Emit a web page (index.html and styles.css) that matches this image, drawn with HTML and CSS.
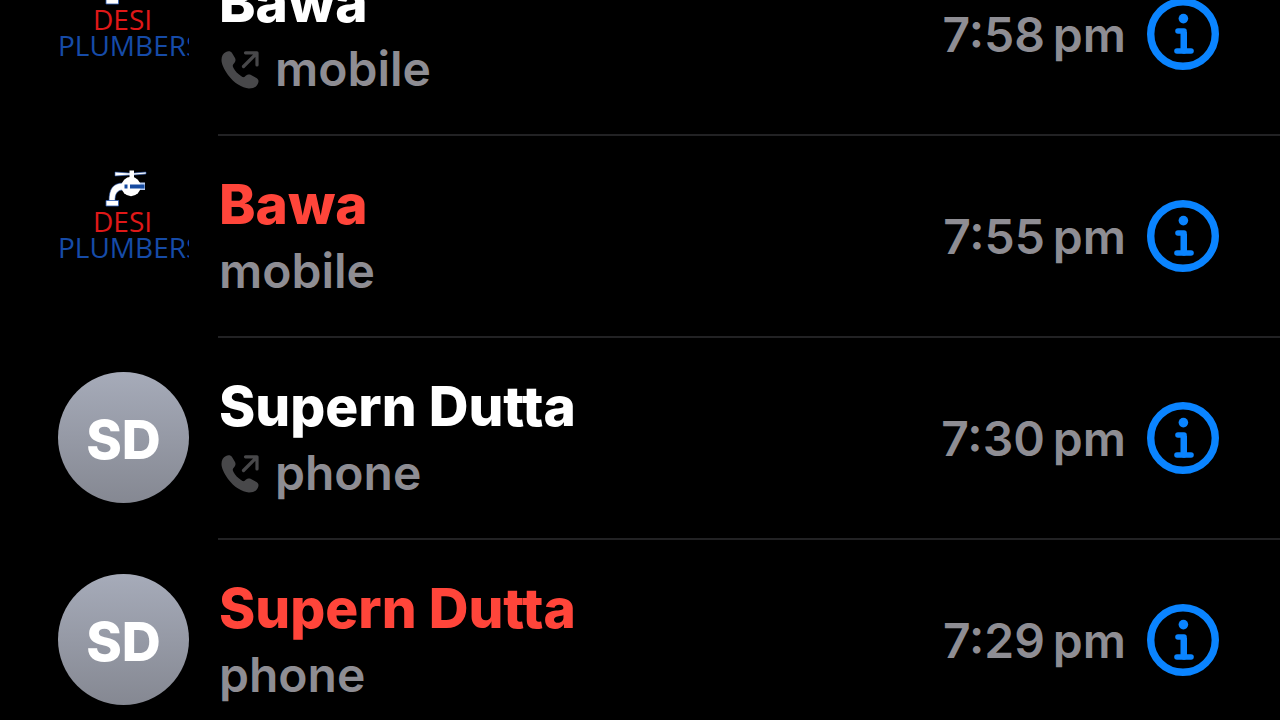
FILE: index.html
```html
<!DOCTYPE html>
<html lang="en">
<head>
    <meta charset="UTF-8">
    <meta name="viewport" content="width=device-width, initial-scale=1">
    <title>Recents</title>
    <link rel="stylesheet" href="styles.css">
</head>
<body>
<!-- shared icons -->
<svg class="sprite" aria-hidden="true">
    <symbol id="info" viewBox="0 0 72 72">
        <circle cx="36" cy="36" r="32.3" fill="none" stroke="currentColor" stroke-width="7.4"/>
        <circle cx="36.4" cy="20.6" r="4.8" fill="currentColor"/>
        <path d="M31 33H37V53" fill="none" stroke="currentColor" stroke-width="5.6" stroke-linecap="round" stroke-linejoin="round"/>
        <path d="M33.5 34H40V52H33.5Z" fill="currentColor"/>
        <path d="M30 53H44" fill="none" stroke="currentColor" stroke-width="5.6" stroke-linecap="round"/>
    </symbol>
    <symbol id="outgoing" viewBox="-2 -1 40 40">
        <path d="M5 2C7 .5 10 1 11 3L14 8C15 10 14.500 12 12.500 14C11.500 15 11.500 16 12.500 18C14 21 17 24 20 26C22 27.500 23 27.500 24 26.500C26 24.500 28 24 30 25L35.500 28C37.500 29.500 38 31 37 33.500C35.500 37 32.500 38.500 28 38.500C21 38 13 33 7 25C3 19 .5 14 .5 10C.5 6 2 3.500 5 2Z" fill="currentColor"/>
        <path d="M22.500 16.500L35 4M24.500 2.800H36V15" fill="none" stroke="currentColor" stroke-width="3.200" stroke-linecap="round" stroke-linejoin="round"/>
    </symbol>
    <symbol id="tap" viewBox="0 0 42 38">
        <path d="M10 2L24 3H29L41 2V4L29 5H25L10 6Z" fill="#fff" stroke="#2858b0" stroke-width=".6"/>
        <path d="M24.500 .5H29V9H24.500Z" fill="#fff"/>
        <path d="M18 13C8 13 4 19 4 31H10C10 24 12 20 18 20Z" fill="#fff" stroke="#2858b0" stroke-width=".6"/>
        <path d="M1 30.500H13.500V36H1Z" fill="#fff" stroke="#2858b0" stroke-width=".8"/>
        <path d="M27 12.500H40V20H27Z" fill="#b9cdf2"/>
        <circle cx="26" cy="16.500" r="9.700" fill="#fff"/>
        <path d="M25 14.500H39.500V18.500H25Z" fill="#164ba0"/>
        <path d="M19.500 14.500H22.500V18.500H19.500Z" fill="#164ba0"/>
    </symbol>
</svg>

<ul class="calls">
    <li class="call">
        <div class="logo">
            <svg class="tap" aria-hidden="true"><use href="#tap"/></svg>
            <span class="desi">DESI</span>
            <span class="plumbers">PLUMBERS</span>
        </div>
        <div class="detail">
            <div class="who">
                <h2 class="name">Bawa</h2>
                <p class="line"><svg class="outgoing" aria-hidden="true"><use href="#outgoing"/></svg>mobile</p>
            </div>
            <time class="time" datetime="19:58">7:58&#8198;pm</time>
            <button class="info" type="button" aria-label="Call info"><svg><use href="#info"/></svg></button>
        </div>
    </li>
    <li class="call missed">
        <div class="logo">
            <svg class="tap" aria-hidden="true"><use href="#tap"/></svg>
            <span class="desi">DESI</span>
            <span class="plumbers">PLUMBERS</span>
        </div>
        <div class="detail">
            <div class="who">
                <h2 class="name">Bawa</h2>
                <p class="line">mobile</p>
            </div>
            <time class="time" datetime="19:55">7:55&#8198;pm</time>
            <button class="info" type="button" aria-label="Call info"><svg><use href="#info"/></svg></button>
        </div>
    </li>
    <li class="call">
        <div class="avatar">SD</div>
        <div class="detail">
            <div class="who">
                <h2 class="name">Supern Dutta</h2>
                <p class="line"><svg class="outgoing" aria-hidden="true"><use href="#outgoing"/></svg>phone</p>
            </div>
            <time class="time" datetime="19:30">7:30&#8198;pm</time>
            <button class="info" type="button" aria-label="Call info"><svg><use href="#info"/></svg></button>
        </div>
    </li>
    <li class="call missed">
        <div class="avatar">SD</div>
        <div class="detail">
            <div class="who">
                <h2 class="name">Supern Dutta</h2>
                <p class="line">phone</p>
            </div>
            <time class="time" datetime="19:29">7:29&#8198;pm</time>
            <button class="info" type="button" aria-label="Call info"><svg><use href="#info"/></svg></button>
        </div>
    </li>
</ul>
</body>
</html>
```
FILE: styles.css
```css
* {
    padding: 0;
    margin: 0;
    box-sizing: border-box;
}

html {
    height: 100%;
    overflow: hidden;
    background: #000;
}

body {
    height: 100%;
    overflow: hidden;
    background: #000;
    color: #fff;
    font-family: Inter, "Liberation Sans", sans-serif;
}

.sprite {
    display: none;
}

/* list is scrolled part way through the first row */
.calls {
    list-style: none;
    margin-top: -66px;
}

.call {
    display: flex;
    align-items: flex-start;
    gap: 29px;
    padding-left: 58px;
}

.avatar,
.logo {
    flex: none;
    width: 131px;
    height: 131px;
    margin-top: 34px;
}

.avatar {
    display: flex;
    align-items: center;
    justify-content: center;
    padding-top: 4px;
    border-radius: 50%;
    background: linear-gradient(#a6abb9, #858892);
    font-size: 54px;
    font-weight: 800;
}

.logo {
    overflow: hidden;
    display: flex;
    flex-direction: column;
    font-family: "Open Sans", "Noto Sans", sans-serif;
    font-size: 28px;
    font-weight: 500;
    line-height: 26px;
    white-space: nowrap;
}

.tap {
    width: 42px;
    height: 38px;
    margin-left: 47px;
}

.desi {
    color: #e01818;
    padding-left: 35px;
}

.plumbers {
    color: #164ba8;
}

.detail {
    flex: 1;
    min-width: 0;
    display: flex;
    align-items: center;
    height: 202px;
    padding-right: 61px;
    border-bottom: 2px solid #222224;
}

.who {
    flex: 1;
    min-width: 0;
    padding-top: 6px;
    padding-left: 1px;
}

.name {
    font-size: 55px;
    line-height: 64px;
    font-weight: 800;
}

.missed .name {
    color: #ff453a;
}

.line {
    display: flex;
    align-items: center;
    gap: 16px;
    color: #8e8d93;
    font-size: 48px;
    line-height: 70px;
    font-weight: 600;
}

.outgoing {
    width: 40px;
    height: 40px;
    color: #48484a;
}

.time {
    color: #8e8d93;
    font-size: 48px;
    font-weight: 600;
    white-space: nowrap;
}

.info {
    width: 72px;
    height: 72px;
    margin-left: 21px;
    border: 0;
    background: none;
    color: #0a84ff;
    cursor: pointer;
}

.info svg {
    display: block;
    width: 72px;
    height: 72px;
}
```
